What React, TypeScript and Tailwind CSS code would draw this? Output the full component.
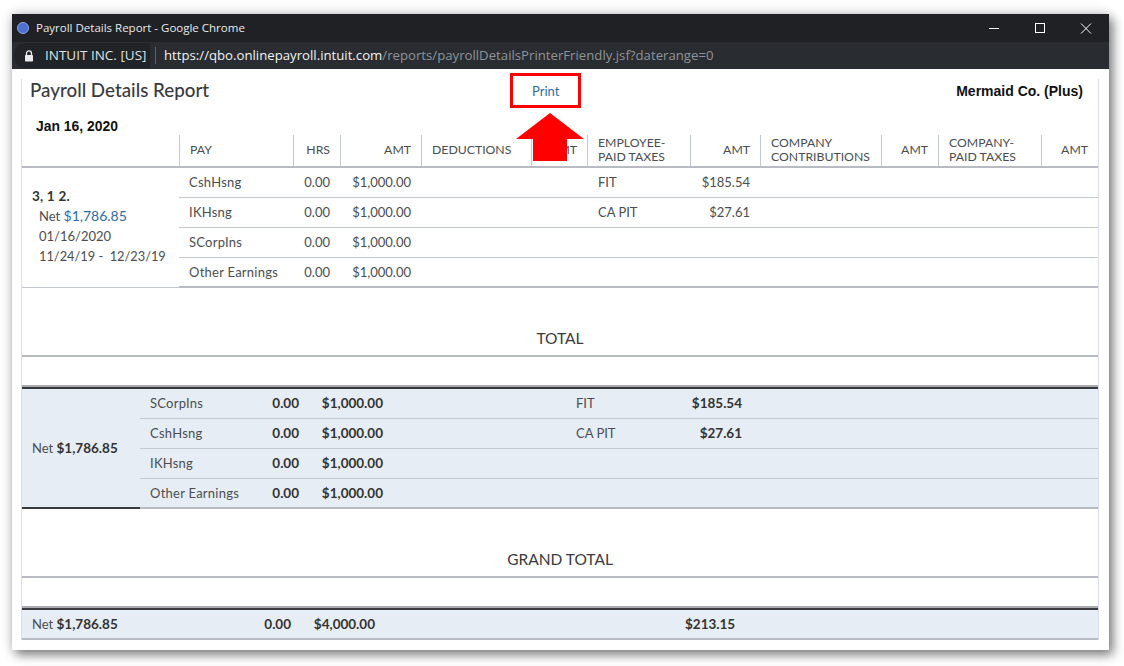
import React from "react";

const cols = "grid-cols-[157px_114px_47px_81px_110px_56px_103px_70px_121px_57px_103px_57px]";
const font = { fontFamily: "Lato, 'Open Sans', sans-serif" };

function HeadCell({ children, right }: { children: React.ReactNode; right?: boolean }) {
  return (
    <div className={`border-l border-[#c4c8cf] h-[31px] flex items-center px-[10px] pb-[1px] text-[12.25px] leading-[14px] text-[#4a4d52] ${right ? "justify-end text-right" : ""}`}>
      <span>{children}</span>
    </div>
  );
}

const detail = [
  ["CshHsng", "FIT", "$185.54"],
  ["IKHsng", "CA PIT", "$27.61"],
  ["SCorpIns", "", ""],
  ["Other Earnings", "", ""],
];

const totals = [
  ["SCorpIns", "FIT", "$185.54"],
  ["CshHsng", "CA PIT", "$27.61"],
  ["IKHsng", "", ""],
  ["Other Earnings", "", ""],
];

function Section({ title }: { title: string }) {
  return (
    <>
      <div className="h-[67px] flex items-end justify-center pb-[7px] text-[15.5px] leading-[20px] text-[#393a3d]">{title}</div>
      <div className="h-[2px] bg-[#b8bbc2]" />
      <div className="h-[28px]" />
      <div className="h-[4px] bg-[#393a3d] border-t-2 border-[#a9abb0]" />
    </>
  );
}

export default function App() {
  return (
    <div className="h-[666px] w-[1124px] bg-white overflow-hidden pl-[12px] pt-[14px]" style={font}>
      <div className="w-[1097px] h-[636px] bg-white flex flex-col shadow-[4px_5px_10px_rgba(0,0,0,0.45),0_0_12px_rgba(0,0,0,0.2)]">
        <div className="h-[28px] bg-[#202124] flex items-center text-white shrink-0">
          <span className="ml-[5px] w-[12px] h-[12px] rounded-full bg-[#4f6fd0] border border-[#8ea4e6]" />
          <span className="ml-[7px] text-[11.5px] text-[#e8eaed]" style={{ fontFamily: "'Open Sans', sans-serif" }}>Payroll Details Report - Google Chrome</span>
          <div className="ml-auto flex items-center text-white">
            <svg width="46" height="28" viewBox="0 0 46 28"><path d="M18 14.5h10" stroke="#fff" strokeWidth="1" /></svg>
            <svg width="46" height="28" viewBox="0 0 46 28"><rect x="18.5" y="9.5" width="9" height="9" fill="none" stroke="#fff" strokeWidth="1" /></svg>
            <svg width="46" height="28" viewBox="0 0 46 28"><path d="M18 9.5l10 10M28 9.5l-10 10" stroke="#fff" strokeWidth="1" /></svg>
          </div>
        </div>
        <div className="h-[27px] bg-[#292c30] flex items-center shrink-0 text-[13.2px]" style={{ fontFamily: "'Open Sans', sans-serif" }}>
          <div className="ml-[2px] h-[25px] w-[136px] rounded-l-[12px] bg-[#212427] flex items-center pl-[10px] shrink-0">
            <svg width="10" height="12" viewBox="0 0 10 12"><path d="M2.5 5V3.4a2.5 2.5 0 0 1 5 0V5" fill="none" stroke="#e8eaed" strokeWidth="1.3" /><rect x="1" y="5" width="8" height="6.5" rx="0.8" fill="#e8eaed" /></svg>
            <span className="ml-[11px] text-[13.5px] text-[#dfe1e5] whitespace-nowrap">INTUIT INC. [US]</span>
          </div>
          <span className="ml-[5px] w-px h-[17px] bg-[#5f6368]" />
          <span className="ml-[8px] text-[#f1f3f4]">https://qbo.onlinepayroll.intuit.com</span>
          <span className="text-[#8f949a]">/reports/payrollDetailsPrinterFriendly.jsf?daterange=0</span>
        </div>
        <div className="flex-1 pt-[10px] pl-[9px] pr-[10px] relative">
          <div className="h-[561px] border-x border-[#dcdcf4] text-[13px] leading-[20px] text-[#4a4d52] relative">
            <div className="h-[56px] flex items-start pl-[8px] pr-[15px]">
              <div className="w-[502px] shrink-0">
                <div className="text-[18.8px] leading-[22px] text-[#393a3d] font-medium">Payroll Details Report</div>
                <div className="mt-[16px] ml-[6px] text-[13.9px] leading-[18px] font-bold text-[#111]" style={{ fontFamily: "'Liberation Sans', sans-serif" }}>Jan 16, 2020</div>
              </div>
              <div className="text-[#2b6ca8] text-[13px] leading-[22px] mt-[1px]">Print</div>
              <div className="ml-auto text-[14px] leading-[22px] mt-[1px] font-bold text-[#111]" style={{ fontFamily: "'Liberation Sans', sans-serif" }}>Mermaid Co. (Plus)</div>
            </div>
            <div className={`grid ${cols} border-b-2 border-[#b8bbc2]`}>
              <div />
              <HeadCell>PAY</HeadCell>
              <HeadCell right>HRS</HeadCell>
              <HeadCell right>AMT</HeadCell>
              <HeadCell>DEDUCTIONS</HeadCell>
              <HeadCell right>AMT</HeadCell>
              <HeadCell>EMPLOYEE-<br />PAID TAXES</HeadCell>
              <HeadCell right>AMT</HeadCell>
              <HeadCell>COMPANY<br />CONTRIBUTIONS</HeadCell>
              <HeadCell right>AMT</HeadCell>
              <HeadCell>COMPANY-<br />PAID TAXES</HeadCell>
              <HeadCell right>AMT</HeadCell>
            </div>
            <div className="flex">
              <div className="w-[157px] h-[120px] border-b border-[#c4c8cf] pl-[10px] pt-[18px] shrink-0">
                <div className="font-bold text-[#333] text-[13.5px] tracking-[0.2px]">3, 1 2.</div>
                <div className="pl-[7px]">Net <span className="text-[#2b6ca8] text-[14px]">$1,786.85</span></div>
                <div className="pl-[7px]">01/16/2020</div>
                <div className="pl-[7px] whitespace-pre text-[12.8px]">11/24/19 -  12/23/19</div>
              </div>
              <div className="flex-1 border-b-2 border-[#b8bbc2] h-[120px]">
                {detail.map((r, i) => (
                  <div key={i} className={`grid grid-cols-[114px_47px_81px_110px_56px_103px_70px_1fr] items-center ${i < 3 ? "h-[30px] pb-px border-b border-[#c4c8cf]" : "h-[28px]"}`}>
                    <div className="pl-[10px] tracking-[0.25px]">{r[0]}</div>
                    <div className="text-right pr-[10px]">0.00</div>
                    <div className="text-right pr-[10px]">$1,000.00</div>
                    <div />
                    <div />
                    <div className="pl-[11px]">{r[1]}</div>
                    <div className="text-right pr-[10px]">{r[2]}</div>
                    <div />
                  </div>
                ))}
              </div>
            </div>
            <Section title="TOTAL" />
            <div className="bg-[#e7edf4] flex h-[120px] border-b-2 border-[#b8bbc2]">
              <div className="w-[118px] h-[120px] border-b-2 border-[#393a3d] flex items-center pl-[10px] pb-px shrink-0">
                <span>Net <b className="font-bold text-[#333] text-[13.5px]">$1,786.85</b></span>
              </div>
              <div className="flex-1">
                {totals.map((r, i) => (
                  <div key={i} className={`h-[30px] pb-[2px] grid grid-cols-[10px_108px_41px_84px_193px_166px_1fr] items-center ${i < 3 ? "border-b border-[#c4c8cf]" : ""}`}>
                    <div />
                    <div className="tracking-[0.25px]">{r[0]}</div>
                    <div className="text-right font-bold text-[#333] text-[13.5px]">0.00</div>
                    <div className="text-right font-bold text-[#333] text-[13.5px]">$1,000.00</div>
                    <div />
                    <div className="flex justify-between">
                      <span>{r[1]}</span>
                      <span className="font-bold text-[#333] text-[13.5px]">{r[2]}</span>
                    </div>
                    <div />
                  </div>
                ))}
              </div>
            </div>
            <Section title="GRAND TOTAL" />
            <div className="bg-[#e7edf4] h-[30px] pb-px border-b-2 border-[#b8bbc2] grid grid-cols-[10px_118px_141px_84px_310px_auto_1fr] items-center">
              <div />
              <div>Net <b className="font-bold text-[#333] text-[13.5px]">$1,786.85</b></div>
              <div className="text-right font-bold text-[#333] text-[13.5px]">0.00</div>
              <div className="text-right font-bold text-[#333] text-[13.5px]">$4,000.00</div>
              <div />
              <div className="font-bold text-[#333] text-[13.5px]">$213.15</div>
              <div />
            </div>
          </div>
          {/* annotation overlay */}
          <div className="absolute left-[498px] top-[4px] w-[71px] h-[35px] border-[3px] border-[#ff0000]" />
          <svg className="absolute left-[504px] top-[44px]" width="68" height="48" viewBox="0 0 68 48">
            <path d="M34 0L68 26H51V48H17V26H0Z" fill="#ff0000" />
          </svg>
        </div>
      </div>
    </div>
  );
}
